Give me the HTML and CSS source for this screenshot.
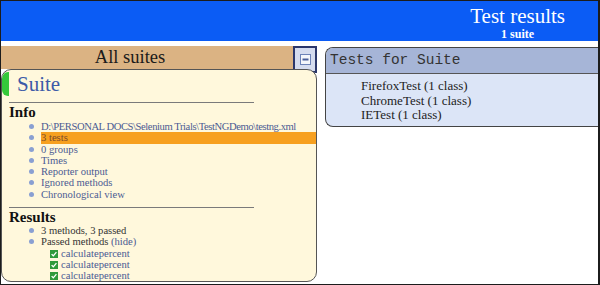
FILE: index.html
```html
<!DOCTYPE html>
<html lang="en">
<head>
    <meta charset="UTF-8">
    <meta name="viewport" content="width=device-width, initial-scale=1.0">
    <title>TestNG Report</title>
    <link rel="stylesheet" href="styles.css">
</head>
<body>
    <div class="frame">
        <div class="top-banner">
            <div class="banner-title">
                <div class="title">Test results</div>
                <div class="sub">1 suite</div>
            </div>
        </div>

        <div class="main">
            <div class="navigator">
                <div class="nav-header">All suites</div>
                <a class="collapse-btn" href="#">
                    <svg width="11" height="11" viewBox="0 0 11 11">
                        <rect x="0.5" y="0.5" width="10" height="10" fill="#f4f6fb" stroke="#6d83b8"/>
                        <rect x="2.5" y="4.5" width="6" height="2" fill="#4a5f9a"/>
                    </svg>
                </a>

                <div class="suite">
                    <div class="suite-name"><span class="marker"></span>Suite</div>
                    <hr>
                    <div class="section">Info</div>
                    <ul class="items">
                        <li class="path">D:\PERSONAL DOCS\Selenium Trials\TestNGDemo\testng.xml</li>
                        <li class="active">3 tests</li>
                        <li>0 groups</li>
                        <li>Times</li>
                        <li>Reporter output</li>
                        <li>Ignored methods</li>
                        <li>Chronological view</li>
                    </ul>
                    <hr>
                    <div class="section results">Results</div>
                    <ul class="items">
                        <li class="plain">3 methods, 3 passed</li>
                        <li class="plain">Passed methods <span class="link">(hide)</span>
                            <ul class="methods">
                                <li><svg class="check" width="8" height="8" viewBox="0 0 8 8"><rect width="8" height="8" fill="#2f9a3a"/><path d="M1.6 4.1 L3.3 5.8 L6.4 2.2" fill="none" stroke="#fff" stroke-width="1.3"/></svg>calculatepercent</li>
                                <li><svg class="check" width="8" height="8" viewBox="0 0 8 8"><rect width="8" height="8" fill="#2f9a3a"/><path d="M1.6 4.1 L3.3 5.8 L6.4 2.2" fill="none" stroke="#fff" stroke-width="1.3"/></svg>calculatepercent</li>
                                <li><svg class="check" width="8" height="8" viewBox="0 0 8 8"><rect width="8" height="8" fill="#2f9a3a"/><path d="M1.6 4.1 L3.3 5.8 L6.4 2.2" fill="none" stroke="#fff" stroke-width="1.3"/></svg>calculatepercent</li>
                            </ul>
                        </li>
                    </ul>
                </div>
            </div>

            <div class="tests-panel">
                <div class="panel-header">Tests for Suite</div>
                <div class="panel-body">
                    <div>FirefoxTest (1 class)</div>
                    <div>ChromeTest (1 class)</div>
                    <div>IETest (1 class)</div>
                </div>
            </div>
        </div>
    </div>
</body>
</html>
```
FILE: styles.css
```css
body {
    margin: 0;
    font-family: "Liberation Serif", "Times New Roman", serif;
    background-color: #fff;
}

.frame {
    width: 600px;
    height: 285px;
    box-sizing: border-box;
    border: 1px solid #1c1c1c;
    border-right-width: 2px;
    overflow: hidden;
    background-color: #fff;
}

.top-banner {
    height: 40px;
    background-color: #0b5cf5;
    color: #fff;
    display: flex;
    justify-content: flex-end;
    padding-right: 33px;
}

.banner-title {
    text-align: center;
}

.title {
    font-size: 21px;
    line-height: 24px;
    padding-top: 3px;
}

.sub {
    font-size: 12px;
    font-weight: bold;
    line-height: 12px;
}

.main {
    display: flex;
    gap: 8px;
    margin-top: 5px;
}

.navigator {
    position: relative;
    width: 316px;
    flex-shrink: 0;
}

.nav-header {
    height: 23px;
    line-height: 23px;
    background-color: #dbb383;
    font-size: 18.5px;
    color: #1a1a1a;
    text-align: center;
    padding-right: 58px;
}

.collapse-btn {
    position: absolute;
    top: 0;
    right: 0;
    width: 20px;
    height: 23px;
    border: 2px solid #2b376b;
    background-color: #d5dcef;
    display: flex;
    align-items: center;
    justify-content: center;
}

.suite {
    position: relative;
    height: 213px;
    box-sizing: border-box;
    border: 1px solid #555;
    border-radius: 10px;
    background-color: #fff8dc;
    overflow: hidden;
}

.suite-name {
    font-size: 21px;
    line-height: 25px;
    color: #3d5ba8;
    padding-left: 15px;
    margin-top: 2px;
}

.marker {
    position: absolute;
    left: 0;
    top: 2px;
    width: 7px;
    height: 24px;
    background-color: #35c83a;
    border-radius: 6px 0 0 6px;
}

.suite hr {
    width: 245px;
    margin: 5px 0 0 7px;
    border: 0;
    border-top: 1px solid #7a7a7a;
}

.section {
    font-size: 15px;
    font-weight: bold;
    line-height: 17px;
    padding-left: 7px;
    margin-top: 1px;
    color: #111;
}

.section.results {
    line-height: 15px;
    margin-top: 2px;
}

.items {
    margin: 0 0 7px 0;
    padding-left: 39px;
    list-style: none;
}

.items li {
    position: relative;
    font-size: 10.6px;
    line-height: 11.3px;
    color: #4b5b93;
    white-space: nowrap;
}

.items > li::before {
    content: "";
    position: absolute;
    left: -12px;
    top: 3px;
    width: 5px;
    height: 5px;
    border-radius: 50%;
    background-color: #8aa0d2;
}

.items li.path {
    letter-spacing: -0.42px;
}

.items li.active {
    background-color: #f7a01f;
    color: #7a4a2a;
}

.items li.plain {
    color: #333;
}

.link {
    color: #4b5b93;
}

.methods {
    margin: 0;
    padding-left: 9px;
    list-style: none;
}

.methods li {
    color: #4b5b93;
    line-height: 11.4px;
}

.check {
    margin-right: 3px;
    vertical-align: -1px;
}

.tests-panel {
    flex: 1;
    margin-top: 1px;
    height: 80px;
    box-sizing: border-box;
    border: 1px solid #444;
    border-right: none;
    border-radius: 8px 0 0 8px;
    overflow: hidden;
    background-color: #dce5f7;
}

.panel-header {
    height: 25px;
    line-height: 25px;
    background-color: #a6b5d7;
    border-bottom: 1px solid #555;
    font-family: "Liberation Mono", "Courier New", monospace;
    font-size: 14.5px;
    color: #333;
    padding-left: 4px;
}

.panel-body {
    padding: 5px 0 0 35px;
    font-size: 13px;
    line-height: 14.5px;
    color: #222;
}
```
